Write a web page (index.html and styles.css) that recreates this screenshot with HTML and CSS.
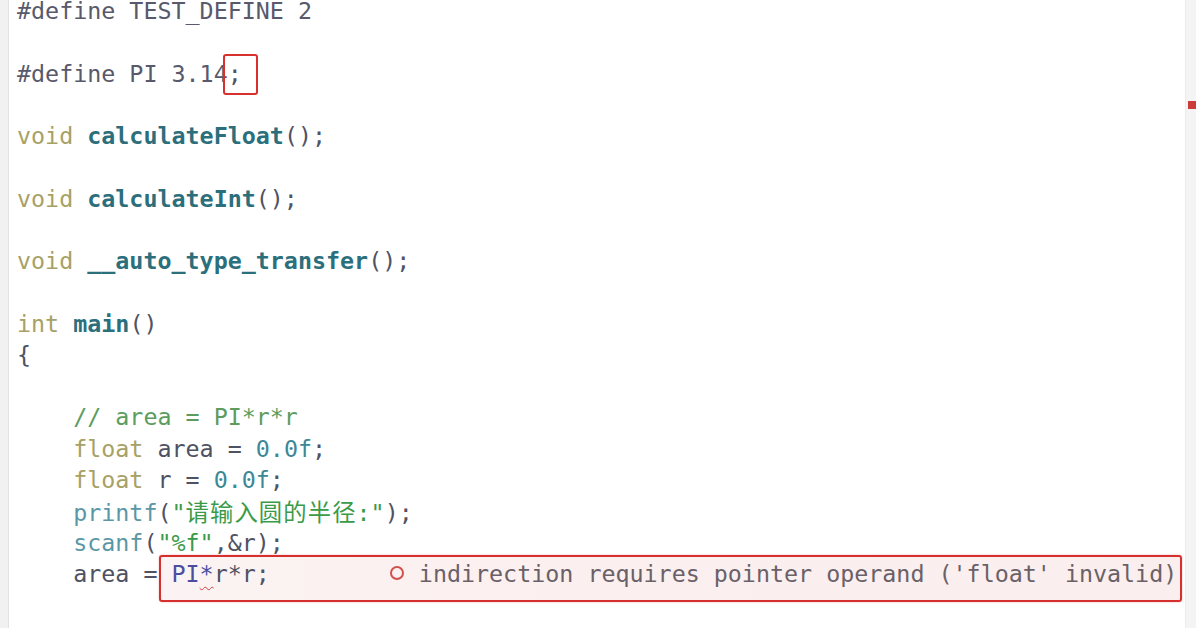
FILE: index.html
```html
<!DOCTYPE html>
<html lang="zh">
<head>
<meta charset="utf-8">
<title>Editor</title>
<link rel="stylesheet" href="styles.css">
</head>
<body>
<div class="editor">
  <div class="gutter"></div>
  <div class="code">
    <div class="line first"><span class="pp">#define TEST_DEFINE 2</span></div>
    <div class="line"></div>
    <div class="line"><span class="pp">#define PI 3.14</span><span class="marked">;</span></div>
    <div class="line"></div>
    <div class="line"><span class="kw">void</span> <span class="fn">calculateFloat</span><span class="tx">();</span></div>
    <div class="line"></div>
    <div class="line"><span class="kw">void</span> <span class="fn">calculateInt</span><span class="tx">();</span></div>
    <div class="line"></div>
    <div class="line"><span class="kw">void</span> <span class="fn">__auto_type_transfer</span><span class="tx">();</span></div>
    <div class="line"></div>
    <div class="line"><span class="kw">int</span> <span class="fn">main</span><span class="tx">()</span></div>
    <div class="line"><span class="tx">{</span></div>
    <div class="line"></div>
    <div class="line">    <span class="cm">// area = PI*r*r</span></div>
    <div class="line">    <span class="kw">float</span> <span class="tx">area = </span><span class="num">0.0f</span><span class="tx">;</span></div>
    <div class="line">    <span class="kw">float</span> <span class="tx">r = </span><span class="num">0.0f</span><span class="tx">;</span></div>
    <div class="line">    <span class="call">printf</span><span class="tx">(</span><span class="str">"<span class="cjk">请输入圆的半径</span>:"</span><span class="tx">);</span></div>
    <div class="line">    <span class="call">scanf</span><span class="tx">(</span><span class="str">"%f"</span><span class="tx">,&amp;r);</span></div>
    <div class="line">    <span class="tx">area = </span><span class="err-zone"><span class="mac">PI</span><span class="squig">*</span><span class="tx">r*r;</span><span class="err-msg"><span class="err-icon"></span><span>indirection requires pointer operand ('float' invalid)</span></span></span></div>
    <div class="line"></div>
  </div>
  <div class="scrollbar"><div class="marker"></div></div>
</div>
</body>
</html>
```

FILE: styles.css
```css
html, body {
  margin: 0;
  padding: 0;
  background: #ffffff;
}

.editor {
  display: flex;
  width: 1196px;
  height: 628px;
  overflow: hidden;
  background: #ffffff;
}

.gutter {
  flex: 0 0 8px;
  background: #f1f1f2;
  border-right: 1px solid #e3e3e6;
}

.code {
  flex: 1 1 auto;
  padding-left: 8px;
  font-family: "DejaVu Sans Mono", "Liberation Mono", "Noto Sans CJK SC", monospace;
  font-size: 23.34px;
  color: #4f5262;
}

.line {
  height: 31.28px;
  line-height: 31.28px;
  white-space: pre;
}

.line.first {
  height: 27.28px;
  line-height: 23.28px;
}

.pp { color: #585a6c; }
.tx { color: #4f5262; }
.kw { color: #a7a165; }
.fn { color: #2c6f7c; font-weight: bold; }
.cm { color: #5c9c5e; }
.num { color: #3d8896; }
.call { color: #5b97a6; }
.str { color: #3b9a48; }
.cjk {
  font-family: "Noto Sans CJK SC", sans-serif;
  letter-spacing: 1.1px;
}
.mac { color: #4b4ea0; }

.squig {
  color: #4b4ea0;
  text-decoration: underline wavy #d0403c;
  text-decoration-thickness: 1px;
  text-underline-offset: 4px;
}

.marked {
  position: relative;
  color: #4f5262;
}

.marked::after {
  content: "";
  position: absolute;
  left: -5px;
  right: -16px;
  top: -6px;
  bottom: -7px;
  border: 2px solid #d8302d;
  border-radius: 3px;
}

.err-zone {
  position: relative;
  z-index: 0;
  display: inline-flex;
  align-items: center;
}

.err-zone::before {
  content: "";
  position: absolute;
  left: -13px;
  right: -5px;
  top: -4px;
  bottom: -12px;
  border: 2px solid #d6302e;
  border-radius: 3px;
  background: linear-gradient(90deg, #fbf3f3 0%, #fcefef 40%, #fbeeee 100%);
  box-shadow: 0 0 2px rgba(214, 48, 46, 0.4);
  z-index: -1;
}

.err-msg {
  display: inline-flex;
  align-items: center;
  margin-left: 120px;
  color: #6a6168;
}

.err-icon {
  width: 10px;
  height: 10px;
  border: 2px solid #d2504c;
  border-radius: 50%;
  margin-right: 15px;
  margin-top: -2px;
}

.scrollbar {
  flex: 0 0 10px;
  background: #f4f4f5;
  border-left: 1px solid #ececee;
}

.marker {
  margin-top: 101px;
  margin-left: 2px;
  height: 8px;
  background: #cc3c3a;
}
```
